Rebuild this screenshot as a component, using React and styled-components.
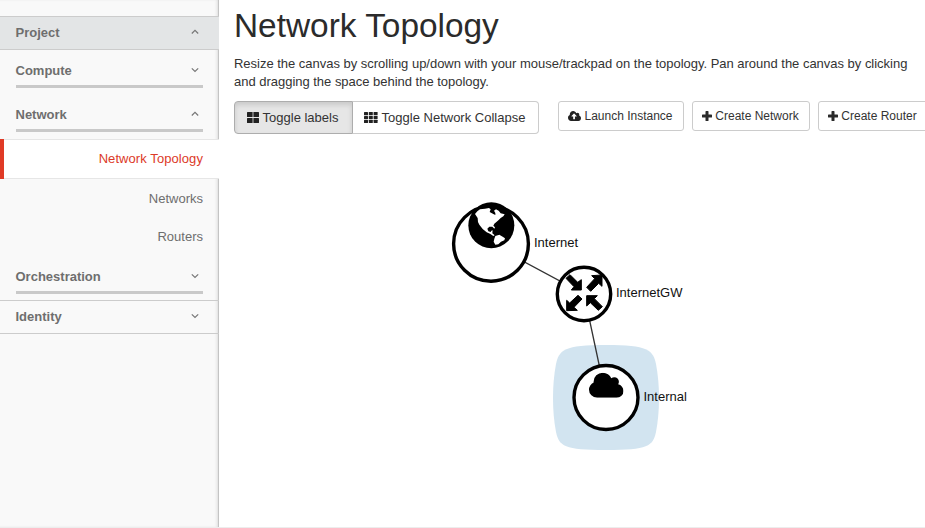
import React from "react";
import styled, { createGlobalStyle, css } from "styled-components";

const GlobalStyle = createGlobalStyle`
  * { box-sizing: border-box; }
  html, body { margin: 0; background: #fff; overflow: hidden; }
  body { font-family: "Liberation Sans", Arial, sans-serif; font-size: 13px; color: #333; }
`;

const Page = styled.div`
  display: grid;
  grid-template-columns: 219px 1fr;
  width: 925px;
  height: 528px;
  border-bottom: 1px solid #ededed;
  overflow: hidden;
`;

const Sidebar = styled.nav`
  display: flex;
  flex-direction: column;
  background: #f9f9f9;
  padding-top: 16px;
  color: #6e6e6e;
  box-shadow: inset -1px 0 0 #c4c4c4, inset -3px 0 3px -1px #dcdcdc;
`;

const Heading = styled.div`
  display: flex;
  align-items: center;
  justify-content: space-between;
  height: 34px;
  margin-top: ${(p) => p.$top || 0}px;
  padding: 0 20px 2px 15.5px;
  font-weight: bold;
  border-top: 1px solid #ccc;
  border-bottom: 1px solid #ccc;
  background: ${(p) => (p.$active ? "#e3e5e6" : "transparent")};
`;

const Group = styled.div`
  display: flex;
  align-items: center;
  justify-content: space-between;
  height: 33px;
  margin: ${(p) => p.$top}px 16px 0 15.5px;
  padding: 0 4px 0 0;
  font-weight: bold;
  border-bottom: 3px solid #c9c9c9;
`;

const Item = styled.div`
  display: flex;
  align-items: center;
  justify-content: flex-end;
  height: 38px;
  padding: 0 16px 0 0;
  ${(p) =>
    p.$selected &&
    css`
      height: 40px;
      margin-top: 7px;
      padding-bottom: 2px;
      letter-spacing: 0.08px;
      color: #dc3a28;
      background: #fff;
      box-shadow: inset 4px 0 0 #e03a26, inset 0 1px 0 #e6e6e6, inset 0 -1px 0 #e6e6e6;
    `}
`;

const Main = styled.main`
  padding: 7px 0 0 15px;
  min-width: 0;
`;

const Title = styled.h1`
  margin: 0;
  font-size: 33.4px;
  font-weight: normal;
  line-height: 38px;
  color: #2b2b2b;
`;

const Description = styled.p`
  margin: 10px 0 0;
  line-height: 18px;
  letter-spacing: -0.018px;
  white-space: nowrap;
`;

const Toolbar = styled.div`
  display: flex;
  align-items: flex-start;
  margin-top: 10px;
  width: 720px;
`;

const ToggleGroup = styled.div`
  display: flex;
  margin-right: 19px;
`;

const Button = styled.button`
  display: flex;
  flex: none;
  align-items: center;
  justify-content: center;
  gap: 3px;
  width: ${(p) => p.$width}px;
  height: 30px;
  margin: 0 8px 0 0;
  padding: 0 1px 0 0;
  font: 12px "Liberation Sans", Arial, sans-serif;
  color: #333;
  white-space: nowrap;
  background: #fff;
  border: 1px solid #ccc;
  border-radius: 3px;
`;

const Toggle = styled(Button)`
  height: 33px;
  margin: 0;
  padding-right: 2px;
  gap: 4px;
  font-size: 13px;
  border-left-width: 0;
  border-radius: 0 4px 4px 0;
  ${(p) =>
    p.$pressed &&
    css`
      background: #e6e6e6;
      border: 1px solid #adadad;
      border-radius: 4px 0 0 4px;
      box-shadow: inset 0 3px 5px rgba(0, 0, 0, 0.125);
    `}
`;

const Canvas = styled.svg`
  display: block;
  margin-left: -15px;
  font-size: 13px;
  fill: #111;
`;

const Chevron = ({ up }) => (
  <svg width="8" height="6" viewBox="0 0 8 6">
    <path d={up ? "M.8 4.5 4 1.3 7.2 4.5" : "M.8 1.3 4 4.5 7.2 1.3"} fill="none" stroke="#777" strokeWidth="1.2" />
  </svg>
);

const Blocks = ({ cols, rows, size, step, width, height }) => (
  <svg width={width} height={height} fill="#222">
    {Array.from({ length: cols * rows }, (_, i) => (
      <rect key={i} x={(i % cols) * step[0]} y={Math.floor(i / cols) * step[1]} width={size[0]} height={size[1]} rx=".5" />
    ))}
  </svg>
);

const Plus = () => (
  <svg width="10" height="10" viewBox="0 0 10 10">
    <path d="M3.5 .6q0-.6.6-.6h1.8q.6 0 .6.6v2.9h2.9q.6 0 .6.6v1.8q0 .6-.6.6H6.5v2.9q0 .6-.6.6H4.1q-.6 0-.6-.6V6.5H.6Q0 6.5 0 5.9V4.1q0-.6.6-.6h2.9z" fill="#2b2b2b" />
  </svg>
);

const CLOUD =
  "1984 1152q0 159-112.5 271.5t-271.5 112.5h-1088q-185 0-316.5-131.5t-131.5-316.5q0-132 71-241.5t187-163.5q-2-28-2-43 0-212 150-362t362-150q158 0 286.5 88t187.5 230q70-62 166-62 106 0 181 75t75 181q0 75-41 138 129 30 213 134.5t84 239.5z";

const CloudUpload = () => (
  <svg width="13" height="10" viewBox="64 128 1920 1408" preserveAspectRatio="none" fill="#222">
    <path fillRule="evenodd" d={"M1344 864q0-14-9-23l-352-352q-9-9-23-9t-23 9l-351 351q-10 12-10 24 0 14 9 23t23 9h224v352q0 13 9.5 22.5t22.5 9.5h192q13 0 22.5-9.5t9.5-22.5v-352h224q13 0 22.5-9.5t9.5-22.5zM" + CLOUD} />
  </svg>
);

const Globe = () => (
  <g transform="translate(440 190) scale(.33333)">
    <circle cx="154" cy="106" r="69" fill="#000" />
    <path
      fill="#fff"
      d="M105 72 112 64 120 58 135 56 147 54 152 58 149 66 160 72 166 75 166 69 162 62 168 58 176 62 182 70 194 73 190 79 182 84 176 90 170 95 163 101 160 107 165 112 163 116 157 110 148 110 142 116 145 124 152 126 154 122 158 121 157 130 164 136 160 138 150 131 140 127 128 117 118 104 114 96 113 84ZM166 138 178 134 188 140 195 145 193 151 183 155 175 163 166 164 161 155 163 146Z"
    />
  </g>
);

const RouterArrows = () => (
  <path
    transform="translate(584 294) scale(.33333)"
    fill="#000"
    stroke="#000"
    strokeWidth="3"
    d="M-54-47-42-58-19-35-8-43V-12H-38L-30-22ZM8-20 20-8 44-32 54-23V-57L23-55 32-46ZM-52 19-43 27-18 4-6 15-30 40-20 49-52 50ZM8 5H40L31 14 55 38 43 49 19 26 8 36Z"
  />
);

const Topology = () => (
  <Canvas width="706" height="393" viewBox="219 134 706 393">
    <path d="M606 345C648 345 653 350 656 364Q659 380 659 398Q659 416 656 432C653 446 648 450 606 450C564 450 559 446 556 432Q553 416 553 398Q553 380 556 364C559 350 564 345 606 345Z" fill="#d2e4f0" />
    <path d="M491 244 584 294 606 397" fill="none" stroke="#333" strokeWidth="1.3" />
    <g fill="#fff" stroke="#000" strokeWidth="3.4">
      <circle cx="491" cy="243.8" r="37.4" />
      <circle cx="584" cy="294" r="26.7" />
      <circle cx="606" cy="397.5" r="32" />
    </g>
    <Globe />
    <RouterArrows />
    <svg x="589" y="372.7" width="34.5" height="25" viewBox="64 128 1920 1408" preserveAspectRatio="none">
      <path d={"M" + CLOUD} fill="#000" />
    </svg>
    <text x="534" y="247">Internet</text>
    <text x="616" y="297">InternetGW</text>
    <text x="643.5" y="400.5">Internal</text>
  </Canvas>
);

export default function App() {
  return (
    <>
      <GlobalStyle />
      <Page>
        <Sidebar>
          <Heading $active>Project <Chevron up /></Heading>
          <Group $top={5}>Compute <Chevron /></Group>
          <Group $top={11}>Network <Chevron up /></Group>
          <Item $selected>Network Topology</Item>
          <Item>Networks</Item>
          <Item>Routers</Item>
          <Group $top={6}>Orchestration <Chevron /></Group>
          <Heading $top={6}>Identity <Chevron /></Heading>
        </Sidebar>
        <Main>
          <Title>Network Topology</Title>
          <Description>
            Resize the canvas by scrolling up/down with your mouse/trackpad on the topology. Pan around the canvas by clicking
            <br />
            and dragging the space behind the topology.
          </Description>
          <Toolbar>
            <ToggleGroup>
              <Toggle $width={119} $pressed><Blocks cols={2} rows={2} size={[5.6, 5]} step={[6.4, 6]} width={12} height={11} />Toggle labels</Toggle>
              <Toggle $width={186}><Blocks cols={3} rows={3} size={[4, 3.2]} step={[4.8, 3.9]} width={14} height={11} />Toggle Network Collapse</Toggle>
            </ToggleGroup>
            <Button $width={126}><CloudUpload />Launch Instance</Button>
            <Button $width={118}><Plus />Create Network</Button>
            <Button $width={110}><Plus />Create Router</Button>
          </Toolbar>
          <Topology />
        </Main>
      </Page>
    </>
  );
}
